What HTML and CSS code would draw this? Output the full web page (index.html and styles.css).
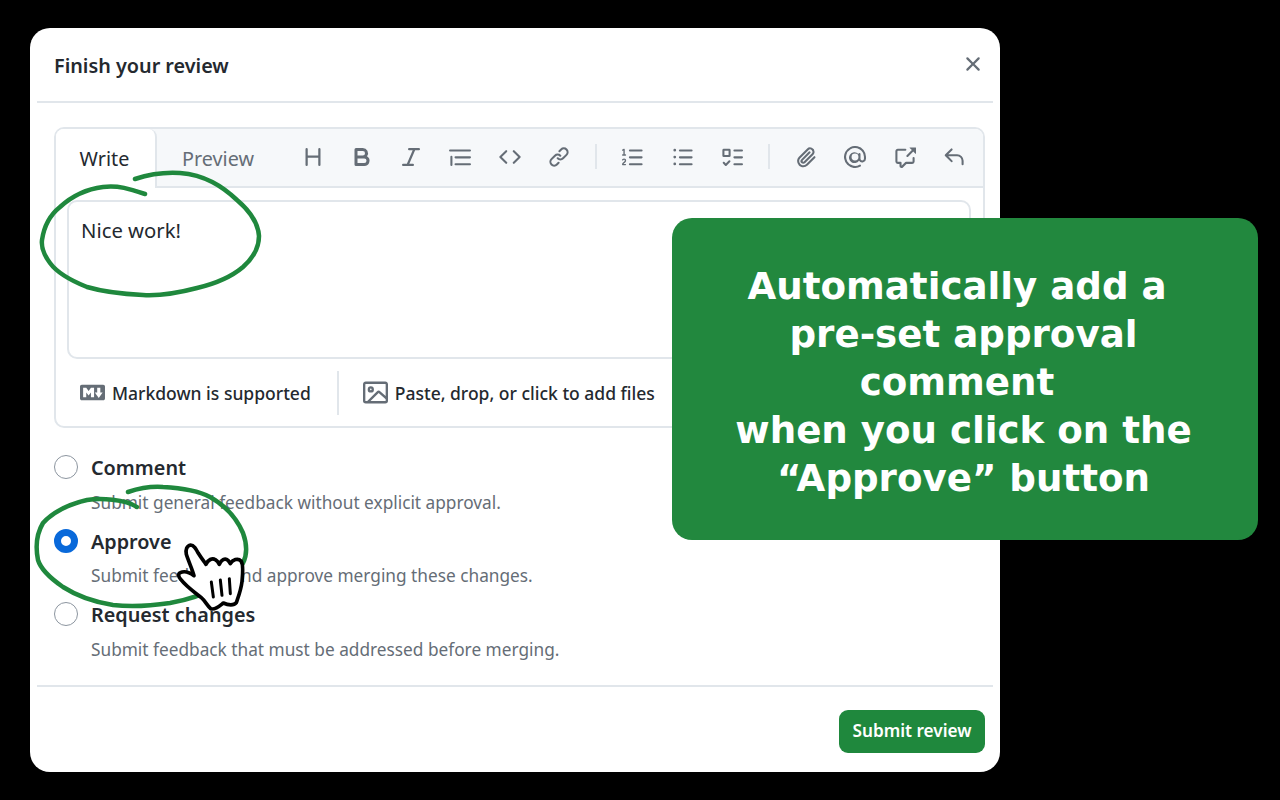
FILE: index.html
```html
<!DOCTYPE html>
<html lang="en">
<head>
<meta charset="utf-8">
<title>Finish your review</title>
<link rel="stylesheet" href="styles.css">
</head>
<body>
<main class="dialog">
  <header class="dialog-head">
    <h1 class="dialog-title">Finish your review</h1>
    <svg class="close" viewBox="0 0 16 16"><path d="M3.72 3.72a.75.75 0 0 1 1.06 0L8 6.94l3.22-3.22a.749.749 0 0 1 1.275.326.749.749 0 0 1-.215.734L9.06 8l3.22 3.22a.749.749 0 0 1-.326 1.275.749.749 0 0 1-.734-.215L8 9.06l-3.22 3.22a.751.751 0 0 1-1.042-.018.751.751 0 0 1-.018-1.042L6.94 8 3.72 4.78a.75.75 0 0 1 0-1.06Z"/></svg>
  </header>
  <section class="dialog-body">
    <div class="editor">
      <div class="editor-head">
        <div class="tab tab-active">Write</div>
        <div class="tab">Preview</div>
        <div class="toolbar">
          <svg class="icon icon-lg" viewBox="0 0 16 16"><path d="M3.75 2a.75.75 0 0 1 .75.75V7h7V2.75a.75.75 0 0 1 1.5 0v10.5a.75.75 0 0 1-1.5 0V8.5h-7v4.75a.75.75 0 0 1-1.5 0V2.75A.75.75 0 0 1 3.75 2Z"/></svg>
          <svg class="icon icon-lg" viewBox="0 0 16 16"><path d="M4 2h4.5a3.501 3.501 0 0 1 2.852 5.53A3.499 3.499 0 0 1 9.5 14H4a1 1 0 0 1-1-1V3a1 1 0 0 1 1-1Zm1 7v3h4.5a1.5 1.5 0 0 0 0-3Zm3.5-2a1.5 1.5 0 0 0 0-3H5v3Z"/></svg>
          <svg class="icon icon-lg" viewBox="0 0 16 16"><path d="M6 2.75A.75.75 0 0 1 6.75 2h6.5a.75.75 0 0 1 0 1.5h-2.505l-3.858 9H9.25a.75.75 0 0 1 0 1.5h-6.5a.75.75 0 0 1 0-1.5h2.505l3.858-9H6.75A.75.75 0 0 1 6 2.75Z"/></svg>
          <svg class="icon" viewBox="0 0 16 16"><path d="M.75 2.5h14.5a.75.75 0 0 1 0 1.5H.75a.75.75 0 0 1 0-1.5Zm4 5h10.5a.75.75 0 0 1 0 1.5H4.75a.75.75 0 0 1 0-1.5Zm0 5h10.5a.75.75 0 0 1 0 1.5H4.75a.75.75 0 0 1 0-1.5ZM2.5 7.75v6a.75.75 0 0 1-1.5 0v-6a.75.75 0 0 1 1.5 0Z"/></svg>
          <svg class="icon" viewBox="0 0 16 16"><path d="m11.28 3.22 4.25 4.25a.75.75 0 0 1 0 1.06l-4.25 4.25a.749.749 0 0 1-1.275-.326.749.749 0 0 1 .215-.734L13.94 8l-3.72-3.72a.749.749 0 0 1 .326-1.275.749.749 0 0 1 .734.215Zm-6.56 0a.751.751 0 0 1 1.042.018.751.751 0 0 1 .018 1.042L2.06 8l3.72 3.72a.749.749 0 0 1-.326 1.275.749.749 0 0 1-.734-.215L.47 8.53a.75.75 0 0 1 0-1.06Z"/></svg>
          <svg class="icon" viewBox="0 0 16 16"><path d="m7.775 3.275 1.25-1.25a3.5 3.5 0 1 1 4.95 4.95l-2.5 2.5a3.5 3.5 0 0 1-4.95 0 .751.751 0 0 1 .018-1.042.751.751 0 0 1 1.042-.018 1.998 1.998 0 0 0 2.83 0l2.5-2.5a2.002 2.002 0 0 0-2.83-2.83l-1.25 1.25a.751.751 0 0 1-1.042-.018.751.751 0 0 1-.018-1.042Zm-4.69 9.64a1.998 1.998 0 0 0 2.83 0l1.25-1.25a.751.751 0 0 1 1.042.018.751.751 0 0 1 .018 1.042l-1.25 1.25a3.5 3.5 0 1 1-4.95-4.95l2.5-2.5a3.5 3.5 0 0 1 4.95 0 .751.751 0 0 1-.018 1.042.751.751 0 0 1-1.042.018 1.998 1.998 0 0 0-2.83 0l-2.5 2.5a1.998 1.998 0 0 0 0 2.83Z"/></svg>
          <span class="tool-sep"></span>
          <svg class="icon" viewBox="0 0 16 16"><path d="M5 3.25a.75.75 0 0 1 .75-.75h8.5a.75.75 0 0 1 0 1.5h-8.5A.75.75 0 0 1 5 3.25Zm0 5a.75.75 0 0 1 .75-.75h8.5a.75.75 0 0 1 0 1.5h-8.5A.75.75 0 0 1 5 8.25Zm0 5a.75.75 0 0 1 .75-.75h8.5a.75.75 0 0 1 0 1.5h-8.5a.75.75 0 0 1-.75-.75ZM.924 10.32a.5.5 0 0 1-.851-.525l.001-.001.001-.002.002-.004.007-.011c.097-.144.215-.273.348-.384.228-.19.588-.392 1.068-.392.468 0 .858.181 1.126.484.259.294.377.673.377 1.038 0 .987-.686 1.495-1.156 1.845l-.047.035c-.303.225-.522.4-.654.597h1.357a.5.5 0 0 1 0 1H.5a.5.5 0 0 1-.5-.5c0-1.005.692-1.52 1.167-1.875l.035-.025c.531-.396.8-.625.8-1.078a.57.57 0 0 0-.128-.376C1.806 10.068 1.695 10 1.5 10a.658.658 0 0 0-.429.163.835.835 0 0 0-.144.153ZM2.003 2.5V6h.503a.5.5 0 0 1 0 1H.5a.5.5 0 0 1 0-1h.503V3.308l-.28.14a.5.5 0 0 1-.446-.895l1.003-.5a.5.5 0 0 1 .723.447Z"/></svg>
          <svg class="icon" viewBox="0 0 16 16"><path d="M5.75 2.5h8.5a.75.75 0 0 1 0 1.5h-8.5a.75.75 0 0 1 0-1.5Zm0 5h8.5a.75.75 0 0 1 0 1.5h-8.5a.75.75 0 0 1 0-1.5Zm0 5h8.5a.75.75 0 0 1 0 1.5h-8.5a.75.75 0 0 1 0-1.5ZM2 14a1 1 0 1 1 0-2 1 1 0 0 1 0 2Zm1-6a1 1 0 1 1-2 0 1 1 0 0 1 2 0ZM2 4a1 1 0 1 1 0-2 1 1 0 0 1 0 2Z"/></svg>
          <svg class="icon" viewBox="0 0 16 16"><path d="M2 2h4a1 1 0 0 1 1 1v4a1 1 0 0 1-1 1H2a1 1 0 0 1-1-1V3a1 1 0 0 1 1-1Zm4.655 8.595a.75.75 0 0 1 0 1.06L4.03 14.28a.75.75 0 0 1-1.06 0l-1.5-1.5a.749.749 0 0 1 .326-1.275.749.749 0 0 1 .734.215l.97.97 2.095-2.095a.75.75 0 0 1 1.06 0ZM9.75 2.5h5.5a.75.75 0 0 1 0 1.5h-5.5a.75.75 0 0 1 0-1.5Zm0 5h5.5a.75.75 0 0 1 0 1.5h-5.5a.75.75 0 0 1 0-1.5Zm0 5h5.5a.75.75 0 0 1 0 1.5h-5.5a.75.75 0 0 1 0-1.5Zm-7.25-9v3h3v-3Z"/></svg>
          <span class="tool-sep"></span>
          <svg class="icon" viewBox="0 0 16 16"><path d="M12.212 3.02a1.753 1.753 0 0 0-2.478.003l-5.83 5.83a3.007 3.007 0 0 0-.88 2.127c0 .795.315 1.551.88 2.116.567.567 1.333.89 2.126.89.79 0 1.548-.321 2.116-.89l5.48-5.48a.75.75 0 0 1 1.061 1.06l-5.48 5.48a4.492 4.492 0 0 1-3.177 1.33c-1.2 0-2.345-.487-3.187-1.33a4.483 4.483 0 0 1-1.32-3.177c0-1.195.475-2.341 1.32-3.186l5.83-5.83a3.25 3.25 0 0 1 5.553 2.297c0 .863-.343 1.691-.953 2.301L7.439 12.39c-.375.377-.884.59-1.416.593a1.998 1.998 0 0 1-1.412-.593 1.992 1.992 0 0 1 0-2.828l5.48-5.48a.751.751 0 0 1 1.042.018.751.751 0 0 1 .018 1.042l-5.48 5.48a.492.492 0 0 0 0 .707.499.499 0 0 0 .352.154.51.51 0 0 0 .356-.154l5.833-5.827a1.755 1.755 0 0 0 0-2.481Z"/></svg>
          <svg class="icon" viewBox="0 0 16 16"><path d="M4.75 2.37a6.501 6.501 0 0 0 6.5 11.26.75.75 0 0 1 .75 1.298A7.999 7.999 0 0 1 .989 4.148 8 8 0 0 1 16 7.75v1.5a2.75 2.75 0 0 1-5.072 1.475 3.999 3.999 0 0 1-6.65-4.441 4 4 0 0 1 6.222-.497v-.037a.75.75 0 0 1 1.5 0v3.5a1.25 1.25 0 0 0 2.5 0v-1.5a6.5 6.5 0 0 0-9.75-5.38ZM10.5 8a2.5 2.5 0 1 0-5 0 2.5 2.5 0 0 0 5 0Z"/></svg>
          <svg class="icon" viewBox="0 0 16 16"><path d="M2.75 3.5a.25.25 0 0 0-.25.25v7.5c0 .138.112.25.25.25h2a.75.75 0 0 1 .75.75v2.19l2.72-2.72a.749.749 0 0 1 .53-.22h4.5a.25.25 0 0 0 .25-.25v-2.5a.75.75 0 0 1 1.5 0v2.5A1.75 1.75 0 0 1 13.25 13H9.06l-2.573 2.573A1.458 1.458 0 0 1 4 14.543V13H2.75A1.75 1.75 0 0 1 1 11.25v-7.5C1 2.784 1.784 2 2.75 2h5.5a.75.75 0 0 1 0 1.5ZM16 1.25v4.146a.25.25 0 0 1-.427.177L14.03 4.03l-3.75 3.75a.749.749 0 0 1-1.275-.326.749.749 0 0 1 .215-.734l3.75-3.75-1.543-1.543A.25.25 0 0 1 11.604 1h4.146a.25.25 0 0 1 .25.25Z"/></svg>
          <svg class="icon" viewBox="0 0 16 16"><path d="M6.78 1.97a.75.75 0 0 1 0 1.06L3.81 6h6.44A4.75 4.75 0 0 1 15 10.75v2.5a.75.75 0 0 1-1.5 0v-2.5a3.25 3.25 0 0 0-3.25-3.25H3.81l2.97 2.97a.749.749 0 0 1-.326 1.275.749.749 0 0 1-.734-.215L1.47 7.28a.75.75 0 0 1 0-1.06l4.25-4.25a.75.75 0 0 1 1.06 0Z"/></svg>
        </div>
      </div>
      <div class="editor-main">
        <div class="textbox">Nice work!</div>
      </div>
      <div class="editor-foot">
        <svg class="foot-icon" viewBox="0 0 16 16"><path d="M14.85 3c.63 0 1.15.52 1.14 1.15v7.7c0 .63-.51 1.15-1.15 1.15H1.15C.52 13 0 12.48 0 11.84V4.15C0 3.52.52 3 1.15 3ZM9 11V5H7L5.5 7 4 5H2v6h2V8l1.5 1.92L7 8v3Zm2.99.5L14.5 8H13V5h-2v3H9.5Z"/></svg>
        <span class="foot-text">Markdown is supported</span>
        <span class="foot-sep"></span>
        <svg class="foot-icon" viewBox="0 0 16 16"><path d="M16 13.25A1.75 1.75 0 0 1 14.25 15H1.75A1.75 1.75 0 0 1 0 13.25V2.75C0 1.784.784 1 1.75 1h12.5c.966 0 1.75.784 1.75 1.75ZM1.75 2.5a.25.25 0 0 0-.25.25v10.5c0 .138.112.25.25.25h.94l.03-.03 6.077-6.078a1.75 1.75 0 0 1 2.412-.06L14.5 10.31V2.75a.25.25 0 0 0-.25-.25Zm12.5 11a.25.25 0 0 0 .25-.25v-.917l-4.298-3.889a.25.25 0 0 0-.344.009L4.81 13.5ZM7 6a2 2 0 1 1-3.999.001A2 2 0 0 1 7 6ZM5.5 6a.5.5 0 1 0-1 0 .5.5 0 0 0 1 0Z"/></svg>
        <span class="foot-text">Paste, drop, or click to add files</span>
      </div>
    </div>
    <div class="options">
      <div class="option">
        <span class="radio"></span>
        <div class="option-text">
          <div class="option-title">Comment</div>
          <div class="option-desc">Submit general feedback without explicit approval.</div>
        </div>
      </div>
      <div class="option">
        <span class="radio radio-on"></span>
        <div class="option-text">
          <div class="option-title">Approve</div>
          <div class="option-desc">Submit feedback and approve merging these changes.</div>
        </div>
      </div>
      <div class="option">
        <span class="radio"></span>
        <div class="option-text">
          <div class="option-title">Request changes</div>
          <div class="option-desc">Submit feedback that must be addressed before merging.</div>
        </div>
      </div>
    </div>
  </section>
  <footer class="dialog-foot">
    <div class="submit">Submit review</div>
  </footer>
</main>

<svg class="scribble" viewBox="0 0 1280 800">
  <path class="stroke" d="M135 179 C150 174 165 172 180 173 C205 175 222 186 237 200 C250 211 258 222 259 236 C259 250 252 259 243 267 C230 278 214 284 197 288 C178 293 160 296 143 295 C122 294 104 292 87 287 C72 281 58 274 50 263 C44 255 41 248 42 240 C44 226 50 215 60 207 C72 196 87 189 103 187 C118 185 130 189 145 194"/>
  <path class="stroke" d="M128 492 C140 488 150 486 163 487 C182 488 197 490 210 497 C226 506 237 519 243 533 C247 544 247 555 243 563 C236 575 228 581 217 587 C203 595 187 600 170 603 C150 606 130 607 113 605 C94 602 77 596 63 587 C50 578 41 570 38 560 C35 545 37 533 43 523 C53 512 70 504 87 500 C100 498 125 499 137 507"/>
</svg>

<svg class="hand" viewBox="0 0 255 255">
  <path class="hand-fill" d="M62 30 C72 30 78 42 85 55 C93 68 101 78 108 88 C114 74 127 68 136 74 C141 77 145 82 148 88 C153 75 165 68 174 76 C177 79 179 82 181 86 C188 74 204 68 213 78 C220 87 219 110 216 140 C213 165 207 180 199 203 C192 212 175 211 160 204 C150 212 135 226 122 221 C112 212 105 197 94 188 C74 172 50 156 33 134 C24 124 24 116 31 113 C43 107 58 112 72 122 C66 100 55 78 49 58 C46 44 50 32 62 30 Z"/>
  <path class="hand-line" d="M124 141 L130 186 M151 135 L156 181 M178 131 L181 176"/>
</svg>

<aside class="callout">
  <p class="callout-text">Automatically add a&nbsp;<br>pre-set approval<br>comment&nbsp;<br>when you click on the<br>“Approve” button</p>
</aside>
</body>
</html>
```
FILE: styles.css
```css
* { box-sizing: border-box; }
html, body { margin: 0; height: 100%; }
body {
  background: #000;
  padding: 28px 0 0 30px;
  font-family: "Noto Sans", "Open Sans", sans-serif;
  color: #24292f;
  overflow: hidden;
  position: relative;
}
.dialog {
  width: 970px;
  height: 744px;
  background: #fff;
  border-radius: 20px;
  padding: 0 7px;
  display: flex;
  flex-direction: column;
}
.dialog-head {
  height: 75px;
  flex: none;
  padding: 0 8px 0 17px;
  display: flex;
  align-items: center;
  justify-content: space-between;
  border-bottom: 2px solid #e1e6eb;
}
.dialog-title {
  margin: 2px 0 0;
  font-size: 19.8px;
  font-weight: 560;
  line-height: 26px;
}
.close { width: 24px; height: 24px; fill: #656d76; margin-top: -1px; }
.dialog-body {
  flex: 1;
  padding: 24px 8px 0 17px;
  border-bottom: 2px solid #e1e6eb;
}
.editor {
  height: 301px;
  border: 2px solid #e1e6eb;
  border-radius: 10px;
  display: flex;
  flex-direction: column;
}
.editor-head {
  height: 59px;
  flex: none;
  display: flex;
  background: #f6f8fa;
  border-bottom: 2px solid #e1e6eb;
  border-radius: 8px 8px 0 0;
}
.tab {
  width: 122px;
  padding-top: 15px;
  font-size: 19.8px;
  line-height: 30px;
  color: #656d76;
  text-align: center;
  flex: none;
}
.tab-active {
  width: 101px;
  height: 59px;
  color: #24292f;
  background: #fff;
  border-right: 2px solid #e1e6eb;
  border-radius: 8px 8px 0 0;
  padding-right: 2px;
}
.toolbar {
  display: flex;
  align-items: center;
  margin-left: 22.5px;
  padding-bottom: 2px;
}
.icon { width: 22px; height: 22px; fill: #656d76; flex: none; margin-right: 27.3px; }
.icon-lg { width: 24px; height: 24px; margin-left: -1px; margin-right: 26.3px; }
.tool-sep { width: 2px; height: 25px; background: #e1e6eb; margin: 0 25px 0 -2px; flex: none; }
.editor-main { padding: 12px 12px 0 11px; }
.textbox {
  height: 159px;
  border: 2px solid #e1e6eb;
  border-radius: 10px;
  padding: 14px 12px;
  font-size: 20.3px;
  line-height: 28px;
}
.editor-foot {
  flex: 1;
  display: flex;
  align-items: center;
  padding-left: 24px;
}
.foot-icon { width: 25px; height: 25px; fill: #656d76; flex: none; margin-right: 7px; }
.foot-text { font-size: 17.5px; line-height: 24px; font-weight: 500; }
.foot-sep { width: 2px; height: 44px; background: #e1e6eb; margin: 0 24px 0 26px; flex: none; }
.options { padding-top: 24px; }
.option { display: flex; height: 73.5px; gap: 13px; }
.radio {
  width: 24px;
  height: 24px;
  margin-top: 3px;
  border-radius: 50%;
  border: 1.5px solid #8c959f;
  background: #fff;
  flex: none;
}
.radio-on { border: 7px solid #0969da; }
.option-text { padding-top: 1px; }
.option-title { font-size: 19.8px; font-weight: 560; line-height: 30px; }
.option-desc { font-size: 17.25px; line-height: 24px; color: #656d76; margin-top: 7.5px; }
.dialog-foot {
  height: 85px;
  flex: none;
  display: flex;
  justify-content: flex-end;
  align-items: flex-start;
  padding: 23px 8px 0 0;
}
.submit {
  width: 146px;
  height: 43px;
  background: #1f883d;
  color: #fff;
  border-radius: 9px;
  font-size: 17.2px;
  font-weight: 600;
  line-height: 41px;
  text-align: center;
}
.scribble {
  position: absolute;
  left: 0;
  top: 0;
  width: 1280px;
  height: 800px;
  pointer-events: none;
}
.stroke { fill: none; stroke: #1f883d; stroke-width: 4.5; stroke-linecap: round; }
.hand {
  position: absolute;
  left: 170px;
  top: 535px;
  width: 85px;
  height: 85px;
}
.hand-fill { fill: #fff; stroke: #000; stroke-width: 11; stroke-linejoin: round; }
.hand-line { fill: none; stroke: #000; stroke-width: 9; stroke-linecap: round; }
.callout {
  position: absolute;
  left: 672px;
  top: 218px;
  width: 586px;
  height: 322px;
  background: #22883e;
  border-radius: 20px;
  display: flex;
  align-items: center;
  justify-content: center;
  padding: 6px 3px 0 0;
}
.callout-text {
  margin: 0;
  font-family: "DejaVu Sans", sans-serif;
  font-weight: 700;
  font-size: 37.2px;
  line-height: 48px;
  color: #fff;
  text-align: center;
}
```
